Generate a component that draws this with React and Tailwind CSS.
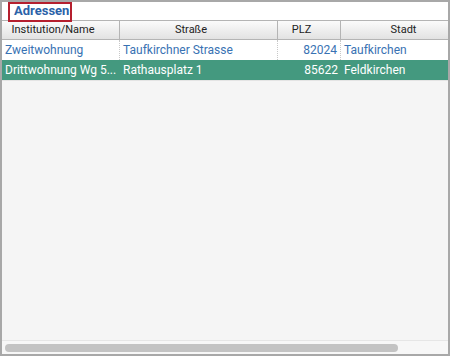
const rows = [
  { name: "Zweitwohnung", street: "Taufkirchner Strasse", plz: "82024", city: "Taufkirchen", selected: false },
  { name: "Drittwohnung Wg 5...", street: "Rathausplatz 1", plz: "85622", city: "Feldkirchen", selected: true },
];

function App() {
  return (
    <div className="w-[450px] h-[356px] border-2 border-[#a8a8a8] bg-[#f5f5f5] flex flex-col overflow-hidden" style={{ fontFamily: "Roboto, 'Liberation Sans', sans-serif" }}>
      <div className="relative h-[18px] bg-white shrink-0">
        <div className="absolute left-[6px] top-0 w-[64px] h-[20px] border-2 border-[#b51f2e]"></div>
        <div className="pl-[12px] pt-[1px] text-[13px] leading-[15px] font-bold text-[#2b62a8]">Adressen</div>
      </div>
      <div className="flex-1 overflow-hidden">
        <div className="grid grid-cols-[118px_158px_63px_140px] h-[20px] border-t border-b border-[#b4b4b4] bg-gradient-to-b from-[#fbfbfb] to-[#e2e2e2] text-[11px] text-[#222] leading-[18px]">
          <div className="text-center pr-[15px] border-r border-[#b4b4b4]">Institution/Name</div>
          <div className="text-center pr-[15px] border-r border-[#b4b4b4]">Straße</div>
          <div className="text-center pr-[15px] border-r border-[#b4b4b4]">PLZ</div>
          <div className="text-center pr-[15px]">Stadt</div>
        </div>
        {rows.map((r) => (
          <div
            key={r.name}
            className={
              r.selected
                ? "grid grid-cols-[118px_158px_63px_140px] h-[20px] bg-[#44997f] text-white text-[12px] leading-[20px]"
                : "grid grid-cols-[118px_158px_63px_140px] h-[20px] bg-white text-[#3872b3] text-[12px] leading-[20px]"
            }
          >
            <div className={r.selected ? "pl-[3px] truncate" : "pl-[3px] truncate border-r border-dotted border-[#c8c8c8]"}>{r.name}</div>
            <div className={r.selected ? "pl-[3px] truncate" : "pl-[3px] truncate border-r border-dotted border-[#c8c8c8]"}>{r.street}</div>
            <div className={r.selected ? "pr-[3px] text-right" : "pr-[3px] text-right border-r border-dotted border-[#c8c8c8]"}>{r.plz}</div>
            <div className="pl-[3px]">{r.city}</div>
          </div>
        ))}
        <div className="h-px bg-[#e4e4e4]"></div>
      </div>
      <div className="h-[14px] shrink-0 border-t border-[#e6e6e6] bg-[#f7f7f7] flex items-center px-[3px]">
        <div className="w-[393px] h-[8px] rounded-full bg-[#c3c3c3]"></div>
      </div>
    </div>
  );
}

export default App;
